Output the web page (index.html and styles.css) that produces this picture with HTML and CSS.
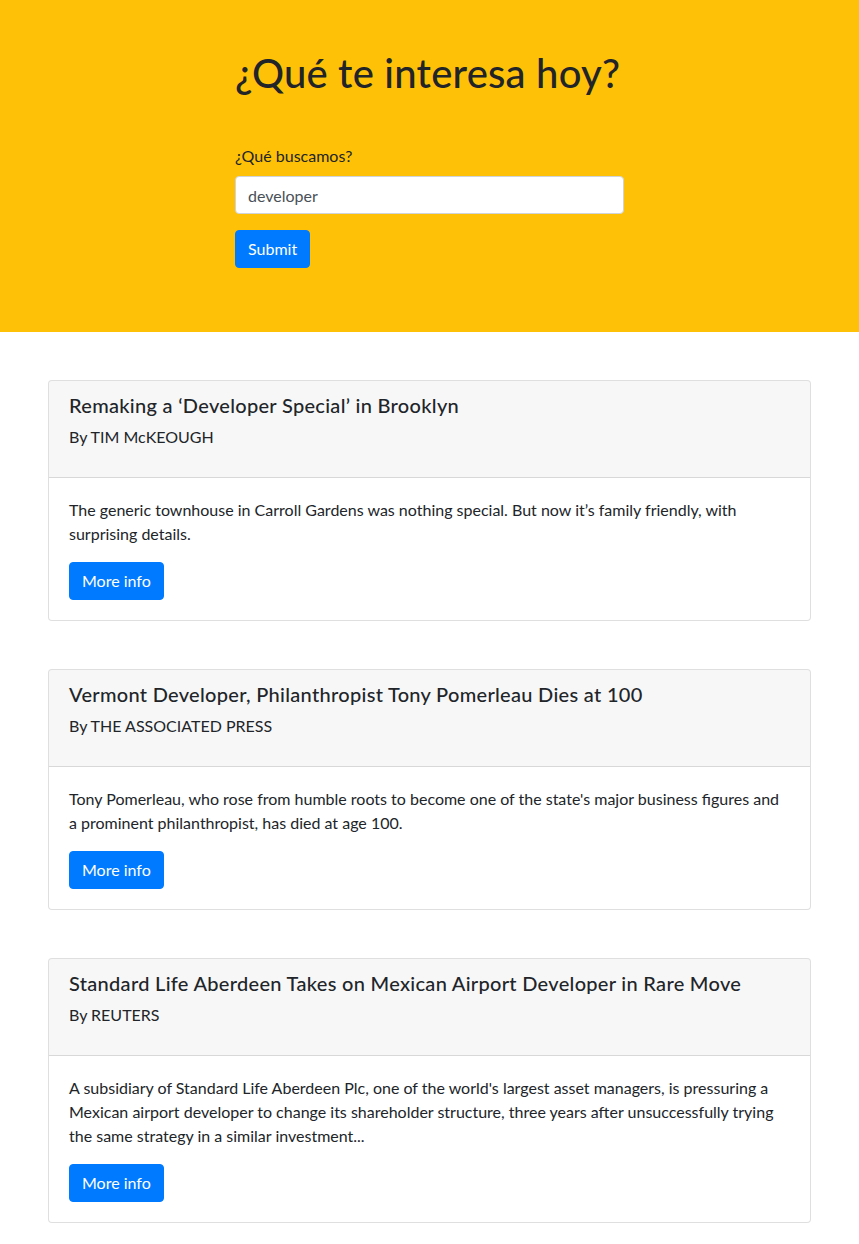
FILE: index.html
```html
<!DOCTYPE html>
<html lang="es">
<head>
<meta charset="utf-8">
<title>¿Qué te interesa hoy?</title>
<link rel="stylesheet" href="styles.css">
</head>
<body>
<header class="hero">
  <div class="hero-inner">
    <h1 class="hero-title">¿Qué te interesa hoy?</h1>
    <form class="search-form">
      <div class="form-group">
        <label class="form-label" for="q">¿Qué buscamos?</label>
        <input class="form-input" id="q" type="text" value="developer">
      </div>
      <button type="button" class="btn">Submit</button>
    </form>
  </div>
</header>
<main class="results">
  <article class="card">
    <div class="card-header">
      <h5 class="card-title">Remaking a ‘Developer Special’ in Brooklyn</h5>
      <p class="card-byline">By TIM McKEOUGH</p>
    </div>
    <div class="card-body">
      <p class="card-text">The generic townhouse in Carroll Gardens was nothing special. But now it’s family friendly, with surprising details.</p>
      <a class="btn" href="#">More info</a>
    </div>
  </article>
  <article class="card">
    <div class="card-header">
      <h5 class="card-title">Vermont Developer, Philanthropist Tony Pomerleau Dies at 100</h5>
      <p class="card-byline">By THE ASSOCIATED PRESS</p>
    </div>
    <div class="card-body">
      <p class="card-text">Tony Pomerleau, who rose from humble roots to become one of the state's major business figures and a prominent philanthropist, has died at age 100.</p>
      <a class="btn" href="#">More info</a>
    </div>
  </article>
  <article class="card">
    <div class="card-header">
      <h5 class="card-title">Standard Life Aberdeen Takes on Mexican Airport Developer in Rare Move</h5>
      <p class="card-byline">By REUTERS</p>
    </div>
    <div class="card-body">
      <p class="card-text">A subsidiary of Standard Life Aberdeen Plc, one of the world's largest asset managers, is pressuring a Mexican airport developer to change its shareholder structure, three years after unsuccessfully trying the same strategy in a similar investment...</p>
      <a class="btn" href="#">More info</a>
    </div>
  </article>
</main>
</body>
</html>
```
FILE: styles.css
```css
* { box-sizing: border-box; }
body {
  margin: 0;
  font-family: "Lato", "Liberation Sans", sans-serif;
  font-size: 16px;
  line-height: 1.5;
  color: #212529;
  background: #fff;
}
.hero {
  background: #ffc107;
  padding: 49px 0 64px;
}
.hero-inner {
  width: 389px;
  margin: 0 auto;
}
.hero-title {
  margin: 0 0 47px;
  font-size: 40px;
  font-weight: 500;
  line-height: 48px;
  letter-spacing: 0.2px;
}
.search-form { margin: 0; }
.form-group { margin-bottom: 16px; }
.form-label {
  display: block;
  margin-bottom: 8px;
}
.form-input {
  display: block;
  width: 100%;
  height: 38px;
  padding: 6px 12px;
  font: inherit;
  color: #495057;
  background: #fff;
  border: 1px solid #ced4da;
  border-radius: 4px;
  outline: none;
}
.btn {
  display: inline-block;
  padding: 6px 12px;
  font: inherit;
  line-height: 24px;
  color: #fff;
  background: #007bff;
  border: 1px solid #007bff;
  border-radius: 4px;
  text-decoration: none;
  cursor: pointer;
}
.results {
  padding: 48px 48px 22px;
  display: flex;
  flex-direction: column;
  gap: 48px;
}
.card {
  border: 1px solid rgba(0,0,0,.125);
  border-radius: 4px;
  background: #fff;
  overflow: hidden;
}
.card-header {
  padding: 12px 20px;
  background: rgba(0,0,0,.03);
  border-bottom: 1px solid rgba(0,0,0,.125);
}
.card-title {
  margin: 0 0 8px;
  font-size: 20px;
  font-weight: 500;
  line-height: 24px;
  letter-spacing: 0.3px;
}
.card-byline { margin: 0 0 16px; }
.card-body { padding: 20px; }
.card-text { margin: 0 0 16px; }
```
